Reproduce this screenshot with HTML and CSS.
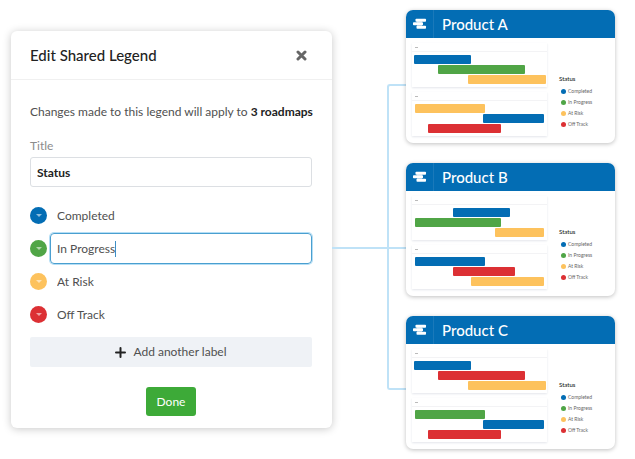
FILE: index.html
```html
<!DOCTYPE html>
<html lang="en">

<head>
    <meta charset="UTF-8">
    <meta name="viewport" content="width=device-width, initial-scale=1.0">
    <title>Edit Shared Legend</title>
    <link rel="stylesheet" href="styles.css">
</head>

<body>
    <!-- shared icons -->
    <svg class="sprite" aria-hidden="true">
        <symbol id="icon-logo" viewBox="0 0 14 12">
            <rect x="2.5" y="0.8" width="10.5" height="3" rx="0.8" />
            <rect x="0" y="4.3" width="10" height="3" rx="0.8" />
            <rect x="3.5" y="7.8" width="9.5" height="3" rx="0.8" />
            <rect x="4" y="3" width="5" height="5.5" opacity="0.5" />
        </symbol>
        <symbol id="icon-caret" viewBox="0 0 8 5">
            <path d="M1 1h6L4 4z" />
        </symbol>
    </svg>

    <main class="scene">
        <form class="modal">
            <div class="modal-header">
                <h1>Edit Shared Legend</h1>
                <button type="button" class="close-btn" aria-label="Close">
                    <svg width="11" height="11" viewBox="0 0 11 11">
                        <path d="M2 2l7 7M9 2l-7 7" />
                    </svg>
                </button>
            </div>
            <div class="modal-body">
                <p class="intro">Changes made to this legend will apply to <strong>3 roadmaps</strong></p>
                <label class="title-label" for="title">Title</label>
                <input class="title-input" id="title" type="text" value="Status">

                <div class="labels">
                    <div class="label-row">
                        <button type="button" class="swatch blue" aria-label="Completed colour"><svg><use href="#icon-caret" /></svg></button>
                        <div class="field"><input type="text" value="Completed" aria-label="First label"></div>
                    </div>
                    <div class="label-row">
                        <button type="button" class="swatch green" aria-label="In Progress colour"><svg><use href="#icon-caret" /></svg></button>
                        <div class="field active"><input type="text" value="In Progress" aria-label="Second label"><span class="cursor"></span></div>
                    </div>
                    <div class="label-row">
                        <button type="button" class="swatch yellow" aria-label="At Risk colour"><svg><use href="#icon-caret" /></svg></button>
                        <div class="field"><input type="text" value="At Risk" aria-label="Third label"></div>
                    </div>
                    <div class="label-row">
                        <button type="button" class="swatch red" aria-label="Off Track colour"><svg><use href="#icon-caret" /></svg></button>
                        <div class="field"><input type="text" value="Off Track" aria-label="Fourth label"></div>
                    </div>
                </div>

                <button type="button" class="add-btn">
                    <svg width="11" height="11" viewBox="0 0 11 11">
                        <path d="M5.5 1v9M1 5.5h9" />
                    </svg>
                    Add another label
                </button>
                <button type="submit" class="done-btn">Done</button>
            </div>
        </form>

        <div class="connector">
            <div class="stem"></div>
            <div class="branch branch-top"></div>
            <div class="branch branch-bottom"></div>
        </div>

        <div class="cards">
            <section class="card">
                <header class="card-header">
                    <span class="logo"><svg><use href="#icon-logo" /></svg></span>
                    <h2>Product A</h2>
                </header>
                <div class="card-body">
                    <div class="lanes">
                        <div class="lane">
                            <div class="lane-head"><span></span></div>
                            <div class="bars">
                                <div class="bar blue" style="margin-left: 1.5%; width: 42%"></div>
                                <div class="bar green" style="margin-left: 19.5%; width: 64%"></div>
                                <div class="bar yellow" style="margin-left: 41.5%; width: 58%"></div>
                            </div>
                        </div>
                        <div class="lane">
                            <div class="lane-head"><span></span></div>
                            <div class="bars">
                                <div class="bar yellow" style="margin-left: 2%; width: 52%"></div>
                                <div class="bar blue" style="margin-left: 52.5%; width: 45.5%"></div>
                                <div class="bar red" style="margin-left: 12%; width: 54%"></div>
                            </div>
                        </div>
                    </div>
                    <div class="legend">
                        <h3>Status</h3>
                        <ul>
                            <li><i class="blue"></i>Completed</li>
                            <li><i class="green"></i>In Progress</li>
                            <li><i class="yellow"></i>At Risk</li>
                            <li><i class="red"></i>Off Track</li>
                        </ul>
                    </div>
                </div>
            </section>

            <section class="card">
                <header class="card-header">
                    <span class="logo"><svg><use href="#icon-logo" /></svg></span>
                    <h2>Product B</h2>
                </header>
                <div class="card-body">
                    <div class="lanes">
                        <div class="lane">
                            <div class="lane-head"><span></span></div>
                            <div class="bars">
                                <div class="bar blue" style="margin-left: 30.5%; width: 42%"></div>
                                <div class="bar green" style="margin-left: 2%; width: 64%"></div>
                                <div class="bar yellow" style="margin-left: 61.5%; width: 36%"></div>
                            </div>
                        </div>
                        <div class="lane">
                            <div class="lane-head"><span></span></div>
                            <div class="bars">
                                <div class="bar blue" style="margin-left: 2%; width: 52%"></div>
                                <div class="bar red" style="margin-left: 30.5%; width: 46%"></div>
                                <div class="bar yellow" style="margin-left: 44%; width: 53.5%"></div>
                            </div>
                        </div>
                    </div>
                    <div class="legend">
                        <h3>Status</h3>
                        <ul>
                            <li><i class="blue"></i>Completed</li>
                            <li><i class="green"></i>In Progress</li>
                            <li><i class="yellow"></i>At Risk</li>
                            <li><i class="red"></i>Off Track</li>
                        </ul>
                    </div>
                </div>
            </section>

            <section class="card">
                <header class="card-header">
                    <span class="logo"><svg><use href="#icon-logo" /></svg></span>
                    <h2>Product C</h2>
                </header>
                <div class="card-body">
                    <div class="lanes">
                        <div class="lane">
                            <div class="lane-head"><span></span></div>
                            <div class="bars">
                                <div class="bar blue" style="margin-left: 1.5%; width: 42%"></div>
                                <div class="bar red" style="margin-left: 19.5%; width: 64%"></div>
                                <div class="bar yellow" style="margin-left: 41.5%; width: 58%"></div>
                            </div>
                        </div>
                        <div class="lane">
                            <div class="lane-head"><span></span></div>
                            <div class="bars">
                                <div class="bar green" style="margin-left: 2%; width: 52%"></div>
                                <div class="bar blue" style="margin-left: 52.5%; width: 45.5%"></div>
                                <div class="bar red" style="margin-left: 12%; width: 54%"></div>
                            </div>
                        </div>
                    </div>
                    <div class="legend">
                        <h3>Status</h3>
                        <ul>
                            <li><i class="blue"></i>Completed</li>
                            <li><i class="green"></i>In Progress</li>
                            <li><i class="yellow"></i>At Risk</li>
                            <li><i class="red"></i>Off Track</li>
                        </ul>
                    </div>
                </div>
            </section>
        </div>
    </main>
</body>

</html>
```
FILE: styles.css
```css
* {
    box-sizing: border-box;
}

body {
    margin: 0;
    background-color: #fff;
    color: #505050;
    font-family: Lato, "Liberation Sans", sans-serif;
    font-size: 12px;
    line-height: 16px;
}

h1, h2, h3, p, ul {
    margin: 0;
    padding: 0;
}

button, input {
    font: inherit;
    color: inherit;
    border: none;
    padding: 0;
    background: none;
}

button {
    cursor: pointer;
}

.sprite {
    display: none;
}

/* colours of the four statuses */
.blue {
    background-color: #036db4;
}

.green {
    background-color: #50a546;
}

.yellow {
    background-color: #fdc25d;
}

.red {
    background-color: #dc3034;
}

.scene {
    display: grid;
    grid-template-columns: 321fr 74px 209fr;
    align-items: start;
    padding: 10px 20px 10px 11px;
}

/* Modal */
.modal {
    min-width: 0;
    margin-top: 21px;
    border-radius: 6px;
    background-color: #fff;
    box-shadow: 0 1px 9px rgba(0, 0, 0, 0.22);
}

.modal-header {
    display: flex;
    align-items: center;
    justify-content: space-between;
    height: 49px;
    padding: 0 25px 0 19px;
    border-bottom: 1px solid #f0f0f0;
}

.modal-header h1 {
    font-size: 15px;
    line-height: 20px;
    font-weight: 500;
    color: #222;
}

.close-btn {
    display: flex;
}

.close-btn svg {
    fill: none;
    stroke: #666;
    stroke-width: 3;
    stroke-linecap: round;
}

.modal-body {
    display: flex;
    flex-direction: column;
    padding: 24px 20px 12px 19px;
}

.intro {
    white-space: nowrap;
}

.intro strong {
    color: #222;
}

.title-label {
    margin-top: 18px;
    color: #8c8c8c;
}

.title-input {
    height: 30px;
    margin-top: 3px;
    padding: 0 6px;
    border: 1px solid #dcdfe3;
    border-radius: 3px;
    font-weight: 700;
    color: #222;
}

.labels {
    display: flex;
    flex-direction: column;
    gap: 2px;
    margin-top: 13px;
}

.label-row {
    display: flex;
    align-items: center;
    gap: 3px;
}

.swatch {
    display: flex;
    align-items: center;
    justify-content: center;
    width: 17px;
    height: 17px;
    border-radius: 50%;
}

.swatch svg {
    width: 8px;
    height: 5px;
    fill: rgba(255, 255, 255, 0.55);
}

.field {
    flex: 1;
    display: flex;
    align-items: center;
    height: 31px;
    padding: 0 6px;
    border: 1px solid transparent;
    border-radius: 4px;
}

.field input {
    field-sizing: content;
    outline: none;
}

.field.active {
    border-color: #4a9fd0;
    box-shadow: 0 0 0 1px #b5def5;
}

.cursor {
    width: 1px;
    height: 16px;
    background-color: #3f8fc4;
}

.add-btn {
    display: flex;
    align-items: center;
    justify-content: center;
    gap: 7px;
    height: 30px;
    margin-top: 7px;
    border-radius: 2px;
    background-color: #eff2f6;
}

.add-btn svg {
    fill: none;
    stroke: #222;
    stroke-width: 2;
    stroke-linecap: round;
}

.done-btn {
    align-self: center;
    height: 29px;
    margin-top: 20px;
    padding: 0 11px;
    border-radius: 3px;
    background-color: #3daa38;
    color: #fff;
}

/* Lines from the modal to the cards */
.connector {
    display: grid;
    grid-template-columns: 1fr 19px;
    grid-template-rows: 165px 141px;
    margin-top: 74px;
}

.stem {
    border-bottom: 2px solid #bfe2f7;
}

.branch {
    grid-column: 2;
    border: 2px solid #bfe2f7;
    border-right: none;
}

.branch-top {
    border-top-left-radius: 3px;
}

.branch-bottom {
    border-top: none;
    border-bottom-left-radius: 3px;
}

/* Roadmap cards */
.cards {
    display: flex;
    flex-direction: column;
    gap: 20px;
}

.card {
    border-radius: 7px;
    background-color: #fff;
    box-shadow: 0 1px 4px rgba(0, 0, 0, 0.25);
    overflow: hidden;
}

.card-header {
    display: flex;
    align-items: stretch;
    height: 28px;
    background-color: #036db4;
    color: #fff;
}

.card-header h2 {
    padding-left: 8px;
    font-size: 15px;
    line-height: 28px;
    font-weight: 500;
}

.logo {
    display: flex;
    align-items: center;
    justify-content: center;
    width: 28px;
    border-right: 1px solid #1a79ba;
}

.logo svg {
    width: 14px;
    height: 12px;
    fill: #fff;
}

.card-body {
    display: flex;
    gap: 12px;
    padding: 5px 6px 7px;
}

.lanes {
    flex: 1;
    display: flex;
    flex-direction: column;
    gap: 5px;
}

.lane {
    background-color: #fff;
    box-shadow: 0 1px 2px rgba(60, 70, 110, 0.14);
}

.lane-head {
    display: flex;
    align-items: center;
    height: 9px;
    padding-left: 3px;
    border-bottom: 1px solid #f3f3f5;
}

.lane-head span {
    width: 3px;
    height: 1px;
    background-color: #bbb;
}

.bars {
    display: flex;
    flex-direction: column;
    gap: 1px;
    padding: 3px 0;
}

.bar {
    height: 9px;
    border-radius: 1px;
}

.legend {
    width: 50px;
    padding-top: 30px;
    font-size: 5px;
    line-height: 11px;
    color: #666;
}

.legend h3 {
    font-size: 6px;
    line-height: 11px;
    font-weight: 500;
    color: #222;
}

.legend ul {
    margin-top: 2px;
    list-style: none;
}

.legend li {
    display: flex;
    align-items: center;
    gap: 2px;
    padding-left: 2px;
}

.legend i {
    width: 5px;
    height: 5px;
    border-radius: 50%;
}
```
